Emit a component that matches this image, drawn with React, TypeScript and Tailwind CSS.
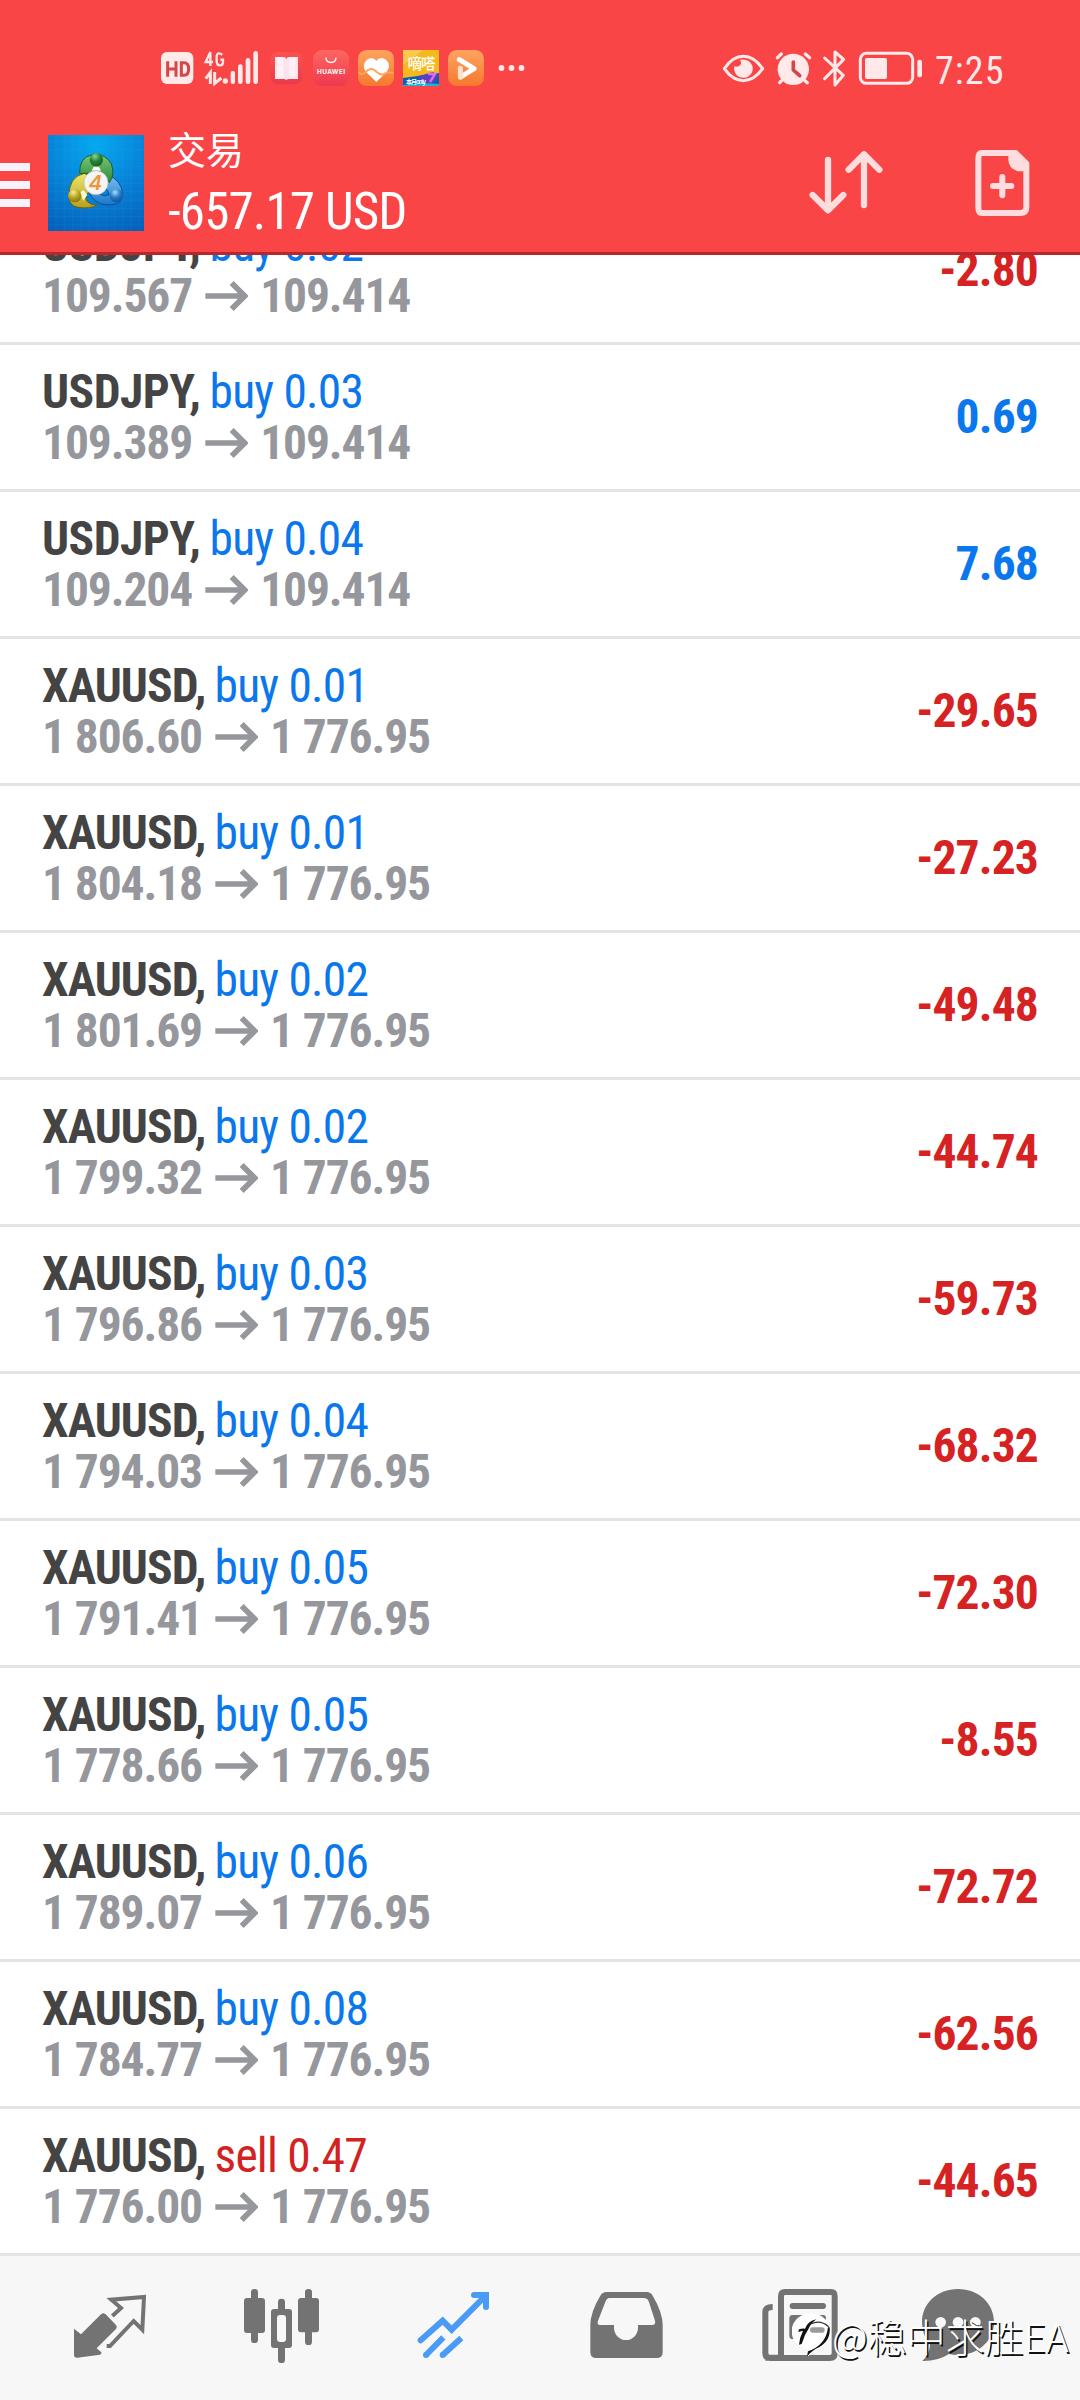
import React from "react";

type Trade = { symbol: string; side: "buy" | "sell"; lot: string; from: string; to: string; profit: string };

const trades: Trade[] = [
  { symbol: "USDJPY", side: "buy", lot: "0.02", from: "109.567", to: "109.414", profit: "-2.80" },
  { symbol: "USDJPY", side: "buy", lot: "0.03", from: "109.389", to: "109.414", profit: "0.69" },
  { symbol: "USDJPY", side: "buy", lot: "0.04", from: "109.204", to: "109.414", profit: "7.68" },
  { symbol: "XAUUSD", side: "buy", lot: "0.01", from: "1 806.60", to: "1 776.95", profit: "-29.65" },
  { symbol: "XAUUSD", side: "buy", lot: "0.01", from: "1 804.18", to: "1 776.95", profit: "-27.23" },
  { symbol: "XAUUSD", side: "buy", lot: "0.02", from: "1 801.69", to: "1 776.95", profit: "-49.48" },
  { symbol: "XAUUSD", side: "buy", lot: "0.02", from: "1 799.32", to: "1 776.95", profit: "-44.74" },
  { symbol: "XAUUSD", side: "buy", lot: "0.03", from: "1 796.86", to: "1 776.95", profit: "-59.73" },
  { symbol: "XAUUSD", side: "buy", lot: "0.04", from: "1 794.03", to: "1 776.95", profit: "-68.32" },
  { symbol: "XAUUSD", side: "buy", lot: "0.05", from: "1 791.41", to: "1 776.95", profit: "-72.30" },
  { symbol: "XAUUSD", side: "buy", lot: "0.05", from: "1 778.66", to: "1 776.95", profit: "-8.55" },
  { symbol: "XAUUSD", side: "buy", lot: "0.06", from: "1 789.07", to: "1 776.95", profit: "-72.72" },
  { symbol: "XAUUSD", side: "buy", lot: "0.08", from: "1 784.77", to: "1 776.95", profit: "-62.56" },
  { symbol: "XAUUSD", side: "sell", lot: "0.47", from: "1 776.00", to: "1 776.95", profit: "-44.65" },
];

function StatusBar() {
  return (
    <div className="flex h-[110px] items-start text-[#ffe9e9]">
      <svg className="mt-[50px] ml-[158px]" width="102" height="38" viewBox="54 60 306 114" fill="currentColor">
        <rect x="63" y="66" width="97" height="96" rx="18" />
        <path d="M83 94v46M108 94v46M83 117h25M124 98v38h8q14 0 14-19t-14-19z" fill="none" stroke="#d2474a" strokeWidth="9" />
        <path d="M211 108V66L197 96h22M247 74q-17-11-17 8v11q0 13 10 13 9 0 9-9v-8h-8" fill="none" stroke="currentColor" strokeWidth="7" />
        <path d="M197 146l14-18v34M224 126v34l20-16" fill="none" stroke="currentColor" strokeWidth="9" />
        <circle cx="256" cy="153" r="8" />
        <rect x="272" y="123" width="13" height="39" rx="6" />
        <rect x="294" y="103" width="14" height="59" rx="7" />
        <rect x="317" y="84" width="14" height="78" rx="7" />
        <rect x="340" y="63" width="14" height="99" rx="7" />
      </svg>
      <svg className="mt-[50px] ml-[9px]" width="36" height="38" viewBox="387 60 108 114">
        <defs>
          <linearGradient id="bk" x1="0" y1="0" x2="0" y2="1"><stop stopColor="#fb5350" /><stop offset="1" stopColor="#e83b4a" /></linearGradient>
        </defs>
        <rect x="390" y="66" width="98" height="97" rx="24" fill="url(#bk)" />
        <path d="M405 81h25q9 0 9 8 0-8 9-8h26v66h-26q-7 0-9 3-2-3-9-3h-25z" fill="#fce3ee" />
        <path d="M412 82h18v63h-18zM448 82h18v63h-18z" fill="#fff1f6" />
      </svg>
      <svg className="mt-[50px] ml-[8px]" width="36" height="36" viewBox="0 0 36 36">
        <defs>
          <linearGradient id="hw" x1="0" y1="0" x2="0" y2="1"><stop stopColor="#ff6660" /><stop offset="1" stopColor="#ec3a50" /></linearGradient>
        </defs>
        <rect width="36" height="36" rx="9" fill="url(#hw)" />
        <path d="M13 7.500q0 5 5 5t5-5" fill="none" stroke="#fff" strokeWidth="1.3" />
        <text x="18" y="23.5" textAnchor="middle" textLength="28" fontSize="6.4" fontWeight="700" fontFamily="Inter, sans-serif" fill="#fff">HUAWEI</text>
      </svg>
      <svg className="mt-[50px] ml-[9px]" width="36" height="36" viewBox="654 60 108 108">
        <defs>
          <linearGradient id="ht" x1="0" y1="0" x2="0" y2="1"><stop stopColor="#ffa460" /><stop offset="1" stopColor="#f6782d" /></linearGradient>
        </defs>
        <rect x="654" y="60" width="108" height="108" rx="26" fill="url(#ht)" />
        <path d="M709 156l-31-30q-14-20 2-36 17-13 29 2 13-15 30-2 15 16 1 36z" fill="#fff" />
        <path d="M656 127q10 10 20 0 17-19 33-2 15 14 27 5 8-5 26 0" fill="none" stroke="#ffa45e" strokeWidth="6" />
      </svg>
      <svg className="mt-[50px] ml-[9px]" width="36" height="36" viewBox="0 0 36 36">
        <rect width="36" height="36" fill="#f5b91d" />
        <path d="M0 0h20L0 15z" fill="#fbc94b" />
        <text x="4.500" y="19" fontSize="14.5" fontWeight="500" textLength="28" fontFamily="'Noto Sans CJK SC', sans-serif" fill="#fff">嘀嗒</text>
        <path d="M0 28l36-5v13H0z" fill="#0d5fb4" />
        <path d="M16 26l14-4 6 4-9 10h-8z" fill="#5b3fc0" />
        <path d="M0 35l20-2 16 1v2H0z" fill="#19b5d8" />
        <text x="3" y="33.500" fontSize="6" fontWeight="700" textLength="20" fontFamily="'Noto Sans CJK SC', sans-serif" fill="#fff">本月only</text>
        <path d="M25 24h7l-5 8" fill="none" stroke="#e06bf0" strokeWidth="2.4" />
      </svg>
      <svg className="mt-[50px] ml-[9px]" width="36" height="36" viewBox="924 60 108 108">
        <rect x="924" y="60" width="108" height="108" rx="26" fill="url(#ht)" />
        <path d="M958 89l44 27-40 25" fill="none" stroke="#fff" strokeWidth="15" strokeLinecap="round" strokeLinejoin="round" />
        <path d="M961 141v-26" stroke="#ffe0cb" strokeWidth="15" strokeLinecap="round" />
      </svg>
      <svg className="mt-[64px] ml-[14px]" width="28" height="8" viewBox="0 0 28 8" fill="#ffe9e9">
        <circle cx="3.500" cy="4" r="2.9" /><circle cx="13.500" cy="4" r="2.9" /><circle cx="23.500" cy="4" r="2.9" />
      </svg>
      <svg className="mt-[50px] ml-[195px]" width="204" height="38" viewBox="63 60 612 114" fill="none" stroke="currentColor" strokeWidth="9">
        <path d="M73 116q25-37 57-37t58 37q-26 36-58 36t-57-36z" strokeLinejoin="round" />
        <path d="M119 90q6 3 4 12-7 12-20 7a28 28 0 1 0 54-2q-8-18-24-18-8-1-14 1z" fill="currentColor" stroke="none" />
        <circle cx="280" cy="118" r="47" fill="currentColor" stroke="none" />
        <path d="M232 83l12-11M316 72l13 11M245 152l-6 6M315 152l7 6" strokeLinecap="round" strokeWidth="10" />
        <path d="M280 96v24l19 17" stroke="#d2474a" strokeWidth="11" strokeLinecap="round" strokeLinejoin="round" />
        <path d="M374 84l56 52-25 29V66l26 22-57 58" strokeLinecap="round" strokeLinejoin="round" strokeWidth="9" />
        <rect x="481" y="70" width="157" height="90" rx="18" strokeWidth="9" />
        <rect x="495" y="84" width="66" height="63" rx="6" fill="currentColor" stroke="none" />
        <rect x="652" y="89" width="14" height="53" rx="6" fill="currentColor" stroke="none" />
      </svg>
      <div className="mt-[49px] ml-[10px] font-['Roboto'] text-[38px] leading-[44px] tracking-[1.1px] whitespace-nowrap">7:25</div>
    </div>
  );
}

function AppLogo() {
  return (
    <svg className="mt-[25px] ml-[18px]" width="96" height="96" viewBox="144 75 288 288">
      <defs>
        <radialGradient id="bg" cx=".5" cy=".1" r="1"><stop stopColor="#05a9f0" /><stop offset=".5" stopColor="#0783d8" /><stop offset="1" stopColor="#0560b8" /></radialGradient>
        <linearGradient id="gr" x1="0" y1="0" x2="0" y2="1"><stop stopColor="#7cc67c" /><stop offset="1" stopColor="#2c8a35" /></linearGradient>
        <linearGradient id="ye" x1="0" y1="0" x2="0" y2="1"><stop stopColor="#ece66a" /><stop offset="1" stopColor="#b5a11b" /></linearGradient>
        <linearGradient id="bl" x1="0" y1="0" x2="0" y2="1"><stop stopColor="#7cc3f2" /><stop offset="1" stopColor="#1878c8" /></linearGradient>
        <radialGradient id="gb" cx=".4" cy=".25" r=".8"><stop stopColor="#8fd38c" /><stop offset=".5" stopColor="#27823a" /><stop offset="1" stopColor="#135f22" /></radialGradient>
        <radialGradient id="yb" cx=".4" cy=".25" r=".8"><stop stopColor="#f6ef9a" /><stop offset=".5" stopColor="#b9a621" /><stop offset="1" stopColor="#81700d" /></radialGradient>
        <radialGradient id="bb" cx=".4" cy=".25" r=".8"><stop stopColor="#aadcff" /><stop offset=".5" stopColor="#2279c4" /><stop offset="1" stopColor="#0d549c" /></radialGradient>
      </defs>
      <rect x="144" y="75" width="288" height="288" fill="url(#bg)" />
      <path d="M168 75v288M193 75v288M218 75v288M243 75v288M268 75v288M293 75v288M318 75v288M343 75v288M368 75v288M393 75v288M418 75v288M144 95h288M144 120h288M144 145h288M144 170h288M144 195h288M144 220h288M144 245h288M144 270h288M144 295h288M144 320h288M144 345h288" stroke="#5cc4ff" strokeOpacity=".13" strokeWidth="2" />
      <path d="M207 262q-2-62 46-72l20 10 0 40q-20 14-14 32 16 16 34 12-24 14-60 8-24-4-26-30z" fill="url(#ye)" stroke="#6b6110" strokeWidth="3" />
      <path d="M320 194q44 14 48 58 0 18-14 28-40 12-66-6-14-10-20-26 14 4 30 4 14 10 30 2-2-12-20-28z" fill="url(#bl)" stroke="#0a4f96" strokeWidth="3" />
      <path d="M239 190q-2-50 40-56 38-4 55 28 12 32-6 56l-16-22q-4-8-12-10-22-4-32 4z" fill="url(#gr)" stroke="#1b5f25" strokeWidth="3" />
      <path d="M281 170h16l6 12h-28z" fill="#fdfdf2" />
      <path d="M240 248l10-8 12 14-12 18z" fill="#fbf9d0" />
      <circle cx="289" cy="149" r="20" fill="url(#gb)" />
      <circle cx="224" cy="257" r="20" fill="url(#yb)" />
      <circle cx="349" cy="257" r="20" fill="url(#bb)" />
      <circle cx="288" cy="218" r="36" fill="#f5f5f5" stroke="#bbb" strokeWidth="2" />
      <text x="286" y="240" textAnchor="middle" fontSize="62" fontWeight="600" fontStyle="italic" fontFamily="Inter, sans-serif" fill="#ee963a">4</text>
    </svg>
  );
}

function Header() {
  return (
    <header className="h-[255px] border-b-[3px] border-[#b8282a] bg-[#fa4547]">
      <StatusBar />
      <div className="flex items-start">
        <div className="mt-[53px] flex w-[30px] flex-col gap-[10px]">
          <div className="h-2 bg-[#f8f3fa]" />
          <div className="h-2 bg-[#f8f3fa]" />
          <div className="h-2 bg-[#f8f3fa]" />
        </div>
        <AppLogo />
        <div className="ml-[24px] w-[640px] text-white">
          <div className="mt-[11px] h-[54px] font-['Noto_Sans_CJK_SC'] text-[38px] leading-[54px]">交易</div>
          <div className="mt-[5px] h-[64px] text-[51px] leading-[64px] tracking-[-0.85px] whitespace-nowrap">-657.17 USD</div>
        </div>
        <svg className="mt-[40px] ml-0" width="76" height="66" viewBox="144 120 228 198" fill="none" stroke="#ffdcdd" strokeWidth="19" strokeLinecap="round" strokeLinejoin="round">
          <path d="M204 150v150M158 255l46 46 46-46M312 285V134M266 179l46-46 46 46" />
        </svg>
        <svg className="mt-[39px] ml-[90px]" width="56" height="68" viewBox="641 117 168 204" fill="none" stroke="#ffdcdd">
          <path d="M664 129h102l32 32v130q0 18-18 18H664q-10 0-10-18V147q0-18 10-18z" strokeWidth="18" strokeLinejoin="round" />
          <path d="M744 124h22l40 40v20h-34q-28-8-28-36z" fill="#ffdcdd" stroke="none" />
          <path d="M698 228h55M726 201v55" strokeWidth="18" strokeLinecap="round" />
        </svg>
      </div>
    </header>
  );
}

function TradeRow({ t }: { t: Trade }) {
  return (
    <div className="flex h-[147px] shrink-0 items-center justify-between border-b-[3px] border-[#e4e4e4] pr-[42px] pl-[42px] text-[47.5px]">
      <div className="pt-px">
        <div className="h-[51px] leading-[51px] whitespace-pre">
          <span className={t.symbol === "USDJPY" ? "font-bold tracking-[-0.5px] text-[#444444]" : "font-bold tracking-[-0.95px] text-[#444444]"}>{t.symbol},</span>
          <span className={t.side === "buy" ? "ml-[-1px] tracking-[-0.8px] text-[#0a78ec]" : "ml-[-1px] tracking-[-0.8px] text-[#d22222]"}> {t.side} {t.lot}</span>
        </div>
        <div className="flex h-[51px] items-center leading-[51px] font-bold tracking-[-1.1px] whitespace-pre text-[#95979c]">
          <span>{t.from}</span>
          <svg className="mr-[12px] ml-[13px]" width="43" height="30" viewBox="614 515 129 90" fill="none" stroke="currentColor" strokeWidth="17">
            <path d="M615 560h115M694 521l39 39-39 39" />
          </svg>
          <span>{t.to}</span>
        </div>
      </div>
      <div className={t.profit.startsWith("-") ? "pt-[2px] font-bold tracking-[-0.85px] text-[#d62222]" : "pt-[2px] font-bold tracking-[-0.85px] text-[#0a78ec]"}>{t.profit}</div>
    </div>
  );
}

function BottomNav() {
  return (
    <nav className="relative flex h-[144px] items-start bg-[#f7f7f7] text-[#737373]">
      <svg className="mt-[32px] ml-[72px]" width="76" height="80" viewBox="216 144 228 240" fill="currentColor">
        <path d="M222 266l21 17 60-60q7-7 14 0l31 32q5 5 0 12l-58 58 14 12q2 6-4 7l-68 9q-10 1-10-9z" />
        <path d="M337 228l26-24-29-25 98-8-5 98-26-26-71 75h-10" fill="none" stroke="currentColor" strokeWidth="12" />
      </svg>
      <svg className="mt-[32px] ml-[94px]" width="80" height="80" viewBox="726 144 240 240" fill="currentColor">
        <rect x="753" y="147" width="21" height="162" rx="10" />
        <rect x="732" y="174" width="63" height="105" rx="9" />
        <rect x="915" y="147" width="21" height="168" rx="10" />
        <rect x="894" y="174" width="63" height="103" rx="9" />
        <rect x="834" y="176" width="21" height="193" rx="10" />
        <rect x="813" y="207" width="63" height="117" rx="9" />
        <rect x="831" y="225" width="27" height="81" rx="9" fill="#f7f7f7" />
      </svg>
      <svg className="mt-[32px] ml-[94px] text-[#4a9bf5]" width="80" height="80" viewBox="1248 144 240 240" fill="none" stroke="currentColor" strokeWidth="18">
        <path d="M1262 301l66-59 27 27 102-102" strokeLinecap="round" />
        <path d="M1422 165h36v36" strokeLinecap="round" />
        <path d="M1438 156h21q8 0 8 8v22z" fill="currentColor" stroke="none" />
        <path d="M1330 292l-52 53M1384 294l-56 51" />
        <circle cx="1278" cy="345" r="9" fill="currentColor" stroke="none" />
        <circle cx="1328" cy="345" r="9" fill="currentColor" stroke="none" />
      </svg>
      <svg className="mt-[32px] ml-[92px]" width="76" height="80" viewBox="84 144 228 240" fill="currentColor">
        <path d="M140 156h120q12 0 18 11 30 50 30 88v81q0 18-18 18H109q-18 0-18-18v-81q0-38 30-88 6-11 19-11z" />
        <path d="M148 174h102q12 0 16 10l19 58q3 13-9 13h-42v8a36 37 0 0 1-72 0v-8h-42q-10 0-6-13l21-54q5-14 13-14z" fill="#f7f7f7" />
      </svg>
      <svg className="mt-[32px] ml-[98px]" width="80" height="80" viewBox="606 144 240 240" fill="none" stroke="currentColor" strokeWidth="18">
        <path d="M663 353V169q0-13 12-13h138q11 0 11 13v171q0 14-14 14H631q-15 0-15-15V216q0-15 22-15M616 353h47" />
        <path d="M698 198h91M759 234h30M759 276h30" strokeLinecap="round" />
        <rect x="688" y="225" width="47" height="72" rx="10" fill="currentColor" stroke="none" />
        <path d="M712 243v38" stroke="#f7f7f7" strokeWidth="10" />
      </svg>
      <svg className="mt-[32px] ml-[78px]" width="80" height="80" viewBox="1080 144 240 240" fill="currentColor">
        <path d="M1194 147c62 0 108 44 108 99s-46 99-108 99q-15 0-27-3-34 22-80 21 22-20 23-48-24-30-24-69c0-55 46-99 108-99z" />
        <circle cx="1142" cy="247" r="16" fill="#f7f7f7" /><circle cx="1194" cy="247" r="16" fill="#f7f7f7" /><circle cx="1246" cy="247" r="16" fill="#f7f7f7" />
      </svg>
      <div className="absolute top-[54px] left-[792px] flex items-center text-white">
        <svg width="39" height="50" viewBox="36 18 117 150">
          <path d="M95 28a54 52 0 0 1 54 52q0 44-46 60l-20 18 4-22a54 52 0 0 1 8-108z" fill="#fff" />
          <rect x="90" y="70" width="44" height="16" rx="8" fill="#9a9a9a" />
          <path d="M57 76q10-4 18-2 8-22 34-28-18 14-22 26-14 20-22 48l-8 2q2-22 12-42l-14 4z" fill="#111" />
          <path d="M92 60q28-14 54 8" fill="none" stroke="#333" strokeWidth="4" />
          <path d="M149 70q4 40-32 60-22 10-36 28l3-16q54-18 60-72z" fill="#111" />
        </svg>
        <div className="ml-px font-['Noto_Sans_CJK_SC'] text-[39px] leading-[46px] font-light whitespace-nowrap [text-shadow:1.5px_1.5px_0.5px_#111]">@稳中求胜EA</div>
      </div>
    </nav>
  );
}

export default function App() {
  return (
    <div className="flex h-[2400px] w-[1080px] flex-col overflow-hidden bg-white font-['Roboto_Condensed','Roboto',sans-serif] [font-stretch:75%]">
      <Header />
      <main className="flex h-[2001px] flex-col justify-end overflow-hidden">
        {trades.map((t, i) => <TradeRow key={i} t={t} />)}
      </main>
      <BottomNav />
    </div>
  );
}
